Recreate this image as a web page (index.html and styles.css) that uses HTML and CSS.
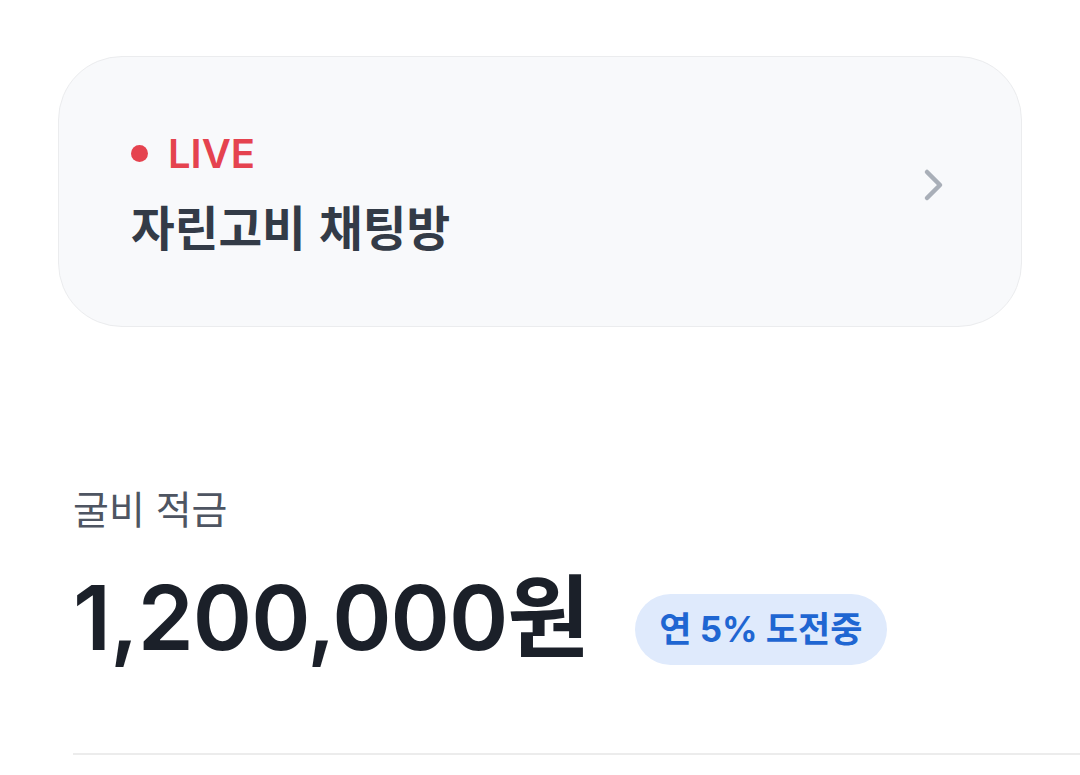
FILE: index.html
```html
<!DOCTYPE html>
<html lang="ko">
<head>
  <meta charset="UTF-8" />
  <title>자린고비</title>
  <link rel="stylesheet" href="styles.css">
</head>
<body>
  <a class="live-card" href="#">
    <div class="live-info">
      <div class="live-tag"><span class="live-dot"></span>LIVE</div>
      <div class="live-title">자린고비 채팅방</div>
    </div>
    <svg class="chevron" width="24" height="36" viewBox="0 0 24 36">
      <path d="M5 5 L18 18 L5 31" fill="none" stroke="#a9afb8" stroke-width="4.5" stroke-linecap="round" stroke-linejoin="round"/>
    </svg>
  </a>

  <div class="saving">
    <div class="saving-label">굴비 적금</div>
    <div class="saving-row">
      <div class="saving-amount">1,200,000원</div>
      <div class="badge">연 5% 도전중</div>
    </div>
  </div>

  <div class="divider"></div>
</body>
</html>
```

FILE: styles.css
```css
body { margin: 0; background: #fff; font-family: Inter, "Noto Sans CJK KR", sans-serif; color: #1b2029; }
a { text-decoration: none; color: inherit; }

.live-card { display: flex; align-items: center; justify-content: space-between; margin: 56px 58px 0 58px; height: 271px; box-sizing: border-box; padding: 0 75px 0 72px; background: #f8f9fb; border: 1px solid #ebecee; border-radius: 64px; }
.live-tag { display: flex; align-items: center; color: #e5434f; font-weight: 600; font-size: 40px; line-height: 48px; }
.live-dot { width: 17px; height: 17px; border-radius: 50%; background: #e5434f; margin-right: 20px; }
.live-title { margin-top: 20px; font-family: "Noto Sans CJK KR", sans-serif; font-weight: 700; font-size: 47.5px; line-height: 56px; color: #333b47; }
.chevron { display: block; margin-bottom: 14px; }

.saving { padding: 0 73px; margin-top: 157px; }
.saving-label { font-family: "Noto Sans CJK KR", sans-serif; font-size: 39px; line-height: 46px; color: #4e5562; }
.saving-row { display: flex; align-items: center; margin-top: 33px; }
.saving-amount { font-family: Inter, "Noto Sans CJK KR", sans-serif; font-weight: 600; font-size: 90px; line-height: 110px; letter-spacing: -1px; color: #1b2029; }
.badge { margin: 22px 0 0 46px; background: #dfeafc; color: #1f66d2; font-family: Inter, "Noto Sans CJK KR", sans-serif; font-weight: 700; font-size: 35px; line-height: 71px; padding: 0 25px 0 24px; border-radius: 36px; }

.divider { margin: 80px 0 0 73px; height: 2px; background: #ececec; }
```
